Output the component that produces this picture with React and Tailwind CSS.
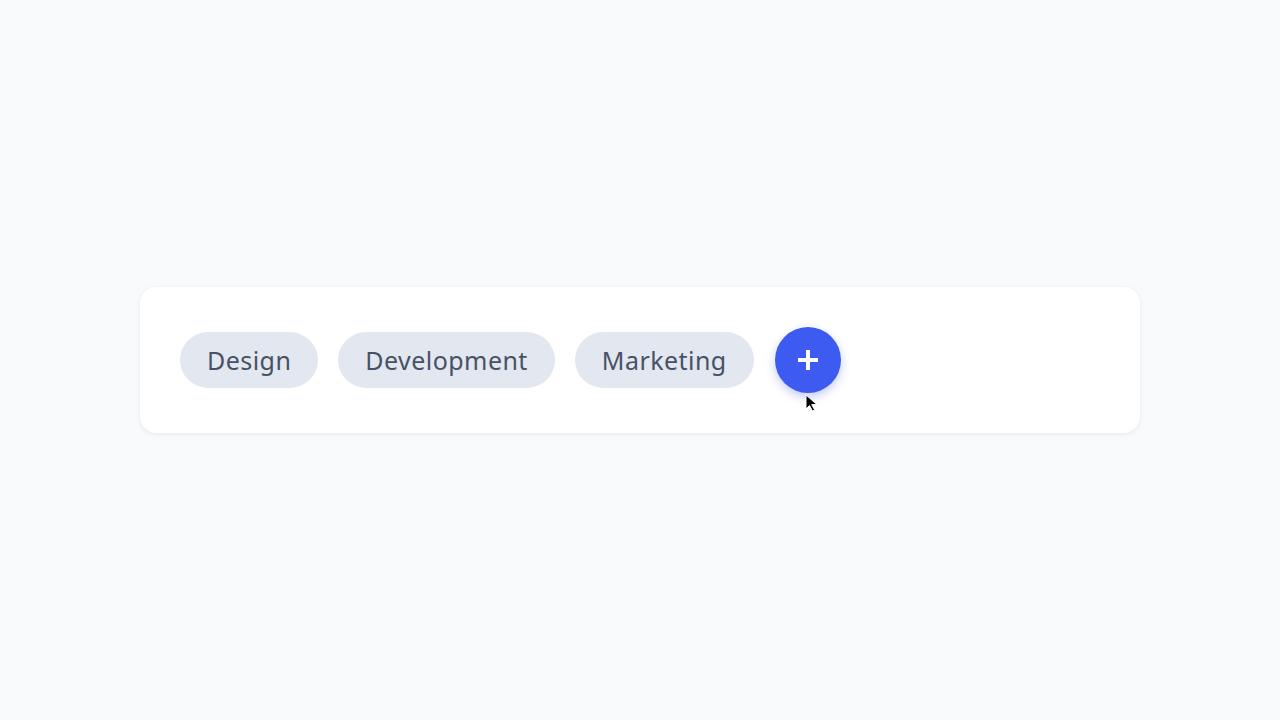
import { useState } from 'react';

const initialTags = ['Design', 'Development', 'Marketing'];

export default function App() {
    const [tags, setTags] = useState(initialTags);

    const addTag = () => setTags((t) => [...t, `Tag ${t.length + 1}`]);

    return (
        <div className="min-h-screen w-full bg-[#f8fafc] flex items-center justify-center"
            style={{ fontFamily: '"Noto Sans", "Open Sans", sans-serif' }}>
            {/* Tag card */}
            <div className="w-[1000px] rounded-2xl bg-white px-10 py-10 shadow-[0_1px_4px_rgba(15,23,42,0.08)]">
                <div className="flex items-center gap-5">
                    {tags.map((tag) => (
                        <span key={tag}
                            className="h-14 px-[27px] pt-px rounded-full bg-[#e3e7f0] text-[#475266] text-[25px] tracking-[0.45px] flex items-center">
                            {tag}
                        </span>
                    ))}

                    {/* Add button */}
                    <div className="relative ml-px">
                        <button onClick={addTag}
                            className="w-[66px] h-[66px] rounded-full bg-[#3d5af1] flex items-center justify-center cursor-pointer
                                shadow-[0_4px_10px_rgba(61,90,241,0.3)]">
                            <svg width="22" height="22" viewBox="0 0 22 22">
                                <path d="M11 1v20M1 11h20" stroke="#fff" strokeWidth="4" />
                            </svg>
                        </button>
                        {/* Pointer */}
                        <svg className="absolute left-[30px] top-[67px]" width="14" height="18" viewBox="0 0 14 18">
                            <path d="M1 1l0 14l3.5-3.5l3 5.5l2.2-1.1l-3-5.3l5.3 0z" fill="#000" stroke="#fff" strokeWidth="1" />
                        </svg>
                    </div>
                </div>
            </div>
        </div>
    );
}
